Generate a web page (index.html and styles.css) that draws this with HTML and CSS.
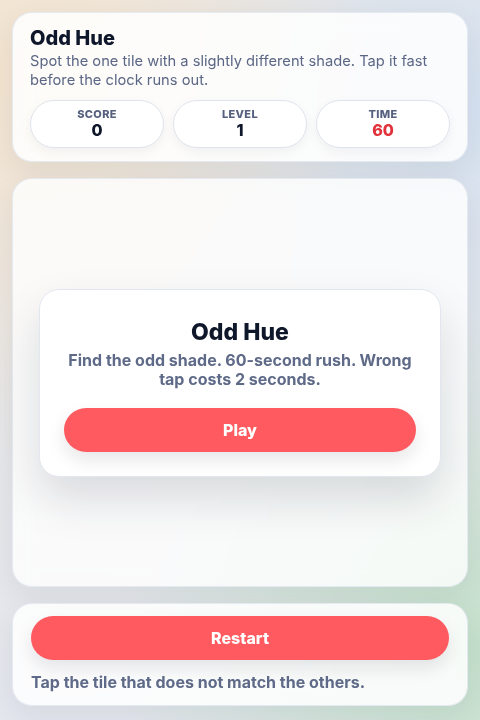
FILE: index.html
```html
<!DOCTYPE html>
<html lang="en">
<head>
    <meta charset="UTF-8">
    <meta name="viewport" content="width=device-width, initial-scale=1.0">
    <title>Odd Hue</title>
    <link rel="stylesheet" href="styles.css">
</head>
<body>

    <div class="app">
        <!-- Header -->
        <header class="card header">
            <h1>Odd Hue</h1>
            <p class="subtitle">Spot the one tile with a slightly different shade. Tap it fast before the clock runs out.</p>
            <div class="stats">
                <div class="stat">
                    <span class="stat-label">Score</span>
                    <span class="stat-value">0</span>
                </div>
                <div class="stat">
                    <span class="stat-label">Level</span>
                    <span class="stat-value">1</span>
                </div>
                <div class="stat">
                    <span class="stat-label">Time</span>
                    <span class="stat-value time">60</span>
                </div>
            </div>
        </header>

        <!-- Board -->
        <main class="card board">
            <div class="start-panel">
                <h2>Odd Hue</h2>
                <p>Find the odd shade. 60-second rush. Wrong tap costs 2 seconds.</p>
                <button class="btn">Play</button>
            </div>
        </main>

        <!-- Footer -->
        <footer class="card footer">
            <button class="btn">Restart</button>
            <p class="hint">Tap the tile that does not match the others.</p>
        </footer>
    </div>

</body>
</html>
```

FILE: styles.css
```css
* {
    box-sizing: border-box;
}

html,
body {
    height: 100%;
}

body {
    margin: 0;
    font-family: 'Inter', 'Noto Sans', sans-serif;
    color: #0f172a;
    background-color: #e6e9ef;
    background-image:
        radial-gradient(circle at 0% 10%, #f3e4d0 0, rgba(243, 228, 208, 0) 45%),
        radial-gradient(circle at 100% 15%, #d6e2f1 0, rgba(214, 226, 241, 0) 50%),
        radial-gradient(circle at 100% 90%, #c5e1cc 0, rgba(197, 225, 204, 0) 45%),
        linear-gradient(180deg, #ece8e4, #e4e7ee);
    overflow: hidden;
}

.app {
    height: 100%;
    padding: 12px 12px 14px;
    display: flex;
    flex-direction: column;
    gap: 16px;
}

.card {
    background: rgba(255, 255, 255, 0.86);
    border: 1px solid rgba(226, 232, 240, 0.9);
    border-radius: 20px;
    box-shadow: 0 10px 30px rgba(15, 23, 42, 0.07);
    backdrop-filter: blur(10px);
}

/* Header */
.header {
    padding: 13px 17px 13px;
}

.header h1 {
    margin: 0;
    font-size: 20px;
    line-height: 25px;
    font-weight: 800;
}

.subtitle {
    margin: 1px 0 0;
    font-size: 14.7px;
    line-height: 19px;
    color: #5b6785;
}

.stats {
    display: grid;
    grid-template-columns: repeat(3, 1fr);
    gap: 9px;
    margin-top: 10px;
}

.stat {
    height: 48px;
    border-radius: 999px;
    background: #fff;
    border: 1px solid #dfe4ec;
    box-shadow: 0 4px 12px rgba(15, 23, 42, 0.05);
    display: flex;
    flex-direction: column;
    align-items: center;
    justify-content: center;
}

.stat-label {
    font-size: 11px;
    line-height: 13px;
    font-weight: 800;
    letter-spacing: 0.3px;
    text-transform: uppercase;
    color: #55617e;
}

.stat-value {
    font-size: 16px;
    line-height: 19px;
    font-weight: 800;
    color: #0f172a;
}

.stat-value.time {
    color: #e2333d;
}

/* Board */
.board {
    flex: 1;
    display: flex;
    align-items: center;
    justify-content: center;
    padding: 0 26px;
    background: rgba(255, 255, 255, 0.8);
}

.start-panel {
    width: 100%;
    background: #fff;
    border: 1px solid #e2e6ee;
    border-radius: 20px;
    padding: 28px 24px 24px;
    text-align: center;
    box-shadow: 0 22px 45px rgba(15, 23, 42, 0.14);
}

.start-panel h2 {
    margin: 0;
    font-size: 23px;
    line-height: 28px;
    font-weight: 800;
}

.start-panel p {
    margin: 5px 0 0;
    font-size: 16px;
    line-height: 19px;
    font-weight: 700;
    color: #5e6a88;
}

.btn {
    display: block;
    width: 100%;
    height: 44px;
    border: none;
    border-radius: 999px;
    background: #ff5a5f;
    color: #fff;
    font-family: inherit;
    font-size: 16px;
    font-weight: 800;
    cursor: pointer;
    box-shadow: 0 8px 18px rgba(15, 23, 42, 0.1);
}

.start-panel .btn {
    margin-top: 19px;
}

/* Footer */
.footer {
    padding: 12px 18px 13px;
}

.hint {
    margin: 12px 0 0;
    font-size: 16px;
    line-height: 20px;
    font-weight: 700;
    color: #5e6a88;
}
```
